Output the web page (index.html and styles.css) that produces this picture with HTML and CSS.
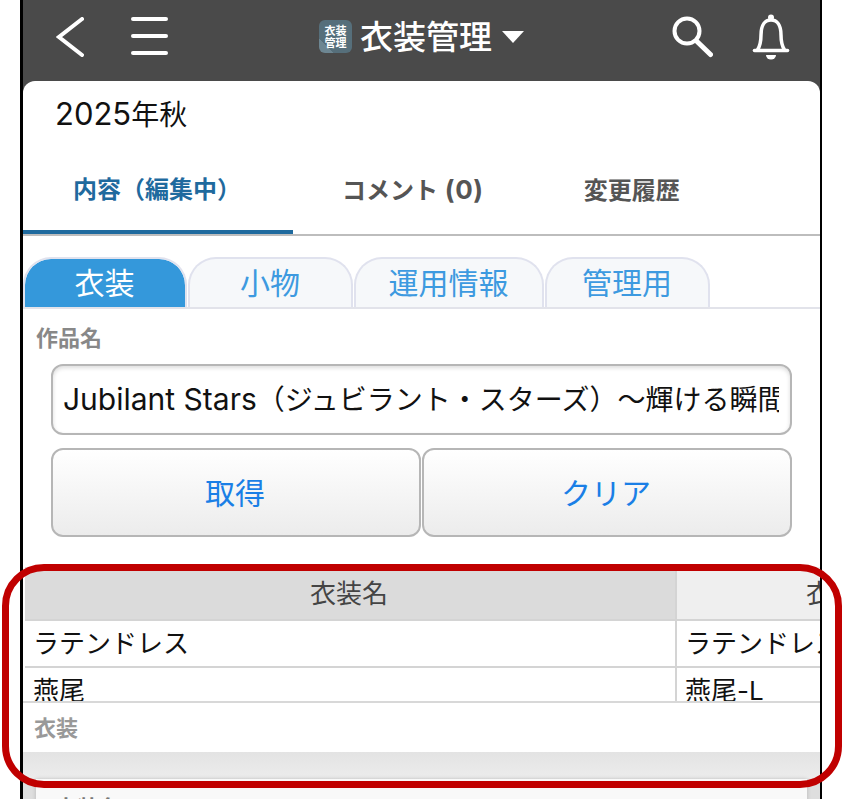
FILE: index.html
```html
<!DOCTYPE html>
<html lang="ja">
<head>
<meta charset="utf-8">
<title>衣装管理</title>
<link rel="stylesheet" href="styles.css">
</head>
<body>
<div class="phone">
  <header class="topbar">
    <svg class="ic-back" width="28" height="40" viewBox="0 0 28 40"><path d="M26 2 L3 20 L26 38" fill="none" stroke="#fff" stroke-width="4" stroke-linecap="round" stroke-linejoin="miter"/></svg>
    <div class="ic-menu"><span></span><span></span><span></span></div>
    <div class="app-icon"><span>衣装</span><span>管理</span></div>
    <div class="app-title">衣装管理</div>
    <div class="caret"></div>
    <svg class="ic-search" width="41" height="42" viewBox="0 0 41 42"><circle cx="15" cy="15" r="12.5" fill="none" stroke="#fff" stroke-width="4"/><path d="M24.5 25 L38.5 38.5" stroke="#fff" stroke-width="5" stroke-linecap="round"/></svg>
    <svg class="ic-bell" width="38" height="47" viewBox="0 0 38 47"><circle cx="19" cy="4.5" r="3" fill="#fff"/><path d="M5.5 37 C8 33 9 29 9 22 C9 12 13 7 19 7 C25 7 29 12 29 22 C29 29 30 33 32.5 37" fill="none" stroke="#fff" stroke-width="3.5"/><path d="M2.5 37.5 H35.5" stroke="#fff" stroke-width="3.6" stroke-linecap="round"/><path d="M14 42 H24 A5 4.5 0 0 1 14 42 Z" fill="#fff"/></svg>
  </header>
  <main class="card">
    <div class="record-title"><span class="digits">2025</span>年秋</div>
    <nav class="nav">
      <div class="nav-item active">内容（編集中）</div>
      <div class="nav-item"><span>コメント<span class="nav-latin">&nbsp;(0)</span></span></div>
      <div class="nav-item">変更履歴</div>
    </nav>
    <div class="subtabs">
      <div class="subtab on">衣装</div>
      <div class="subtab">小物</div>
      <div class="subtab">運用情報</div>
      <div class="subtab">管理用</div>
    </div>
    <div class="field-label">作品名</div>
    <div class="text-input"><div class="text-clip"><span class="input-latin">Jubilant Stars</span>（ジュビラント・スターズ）～輝ける瞬間の物語</div></div>
    <div class="btn-row">
      <button class="btn" type="button">取得</button>
      <button class="btn" type="button">クリア</button>
    </div>
    <div class="table">
      <div class="row head">
        <div class="cell c1">衣装名</div>
        <div class="cell c2">衣装コード</div>
      </div>
      <div class="row">
        <div class="cell c1">ラテンドレス</div>
        <div class="cell c2">ラテンドレス-M</div>
      </div>
      <div class="row">
        <div class="cell c1">燕尾</div>
        <div class="cell c2">燕尾-L</div>
      </div>
    </div>
    <section class="section">
      <div class="section-label">衣装</div>
    </section>
    <div class="well">
      <div class="panel"><div class="panel-label">衣装名</div></div>
    </div>
  </main>
</div>
<div class="highlight"></div>
</body>
</html>
```
FILE: styles.css
```css
* { box-sizing: border-box; }
html, body { margin: 0; padding: 0; height: 799px; overflow: hidden; background: #fff; }
body {
  position: relative;
  font-family: Inter, "Noto Sans CJK JP", sans-serif;
  color: #111;
}
.phone {
  width: 802px;
  height: 799px;
  margin-left: 20px;
  border-left: 3px solid #000;
  border-right: 2px solid #000;
  background: #4a4a4a;
  overflow: hidden;
  display: flex;
  flex-direction: column;
}
.topbar {
  flex: none;
  height: 81px;
  display: flex;
  align-items: center;
  padding-left: 33px;
  color: #fff;
}
.ic-back { margin-top: -8px; }
.ic-menu {
  width: 37px;
  margin-left: 47px;
  margin-top: -9px;
  display: flex;
  flex-direction: column;
  gap: 13px;
}
.ic-menu span { display: block; height: 4px; border-radius: 2px; background: #fff; }
.app-icon {
  width: 33px;
  height: 33px;
  margin-left: 151px;
  margin-top: -8px;
  border-radius: 6px;
  background: linear-gradient(45deg, #6d8692 0 22%, #566f7b 22%);
  display: flex;
  flex-direction: column;
  align-items: center;
  justify-content: center;
  font-size: 11px;
  line-height: 12px;
  font-weight: 700;
  color: #fff;
}
.app-title { margin-left: 8px; margin-top: -8px; font-size: 33px; line-height: 40px; font-weight: 500; white-space: nowrap; }
.caret {
  margin-left: 10px;
  margin-top: -8px;
  width: 0;
  height: 0;
  border-left: 11px solid transparent;
  border-right: 11px solid transparent;
  border-top: 12px solid #fff;
}
.ic-search { margin-left: 148px; margin-top: -8px; }
.ic-bell { margin-left: 39px; margin-top: -9px; }

.card {
  flex: 1;
  min-height: 0;
  background: #fff;
  border-radius: 12px 12px 0 0;
  overflow: hidden;
}
.record-title {
  height: 70px;
  padding: 0 0 6px 32px;
  display: flex;
  align-items: center;
  font-size: 28px;
}
.digits { font-size: 31px; }
.nav {
  height: 85px;
  display: flex;
  border-bottom: 2px solid #bdbdbd;
}
.nav-item {
  padding: 0 51px 8px 49px;
  display: flex;
  align-items: center;
  font-size: 24px;
  font-weight: 700;
  color: #555;
  white-space: nowrap;
}
.nav-latin { font-size: 26px; letter-spacing: .6px; }
.nav-item.active {
  padding-left: 50px;
  padding-right: 52px;
  color: #1f6a9e;
  border-bottom: 4px solid #1f6a9e;
  height: 83px;
  padding-bottom: 6px;
}
.subtabs {
  margin-top: 21px;
  display: grid;
  grid-template-columns: 164px 165px 190px 165px;
  column-gap: 1px;
  height: 52px;
  border-bottom: 2px solid #e2e3ea;
}
.subtab {
  border: 2px solid #e0e2ee;
  border-bottom: 0;
  border-radius: 28px 28px 0 0;
  background: #f6f8fa;
  color: #3d9ae0;
  font-size: 30px;
  line-height: 48px;
  padding-right: 1px;
  text-align: center;
}
.subtab.on {
  background: #3498db;
  color: #fff;
  background-clip: padding-box;
}
.field-label {
  padding-left: 13px;
  margin-top: 15px;
  font-size: 22px;
  line-height: 28px;
  font-weight: 700;
  color: #888;
}
.text-input {
  width: 741px;
  height: 71px;
  margin: 12px 0 0 28px;
  padding: 0 11px 4px 10px;
  border: 2px solid #b6b6b6;
  border-radius: 12px;
  background: #fff;
  box-shadow: inset 0 2px 4px rgba(0,0,0,.14);
  font-size: 28px;
  color: #111;
  display: flex;
  align-items: center;
}
.text-clip { flex: 1; min-width: 0; overflow: hidden; white-space: nowrap; }
.input-latin { font-size: 30px; }
.btn-row {
  margin: 13px 0 0 28px;
  width: 741px;
  display: grid;
  grid-template-columns: 1fr 1fr;
  column-gap: 1px;
}
.btn {
  height: 89px;
  border: 2px solid #b6b6b6;
  border-radius: 12px;
  background: linear-gradient(#fff, #ececec);
  color: #1a7fe6;
  font: inherit;
  font-size: 30px;
  padding: 0 2px 4px 0;
}
.table {
  margin: 30px 0 0 2px;
  height: 134px;
  overflow: hidden;
}
.row {
  display: flex;
  height: 47px;
  font-size: 26px;
  border-bottom: 2px solid #d4d4d4;
}
.row.head { height: 54px; }
.cell {
  flex: none;
  display: flex;
  align-items: center;
  padding: 0 10px 5px 8px;
  white-space: nowrap;
  overflow: hidden;
}
.c1 { width: 652px; border-right: 2px solid #d4d4d4; }
.c2 { width: 200px; }
.row.head .cell { justify-content: center; color: #444; padding-bottom: 4px; }
.row.head .c1 { background: #dbdbdb; padding-right: 10px; }
.row.head .c2 { background: #efefef; justify-content: flex-start; padding-left: 129px; }
.section {
  height: 51px;
  border-top: 2px solid #d8d8d8;
  background: #fff;
  padding: 0 0 4px 11px;
  display: flex;
  align-items: center;
}
.section-label { font-size: 22px; font-weight: 700; color: #999; }
.well {
  height: 60px;
  background: linear-gradient(#e3e3e3, #ececec 26px, #dedede 28px);
  padding: 27px 13px 0;
}
.panel {
  height: 60px;
  background: #f9f9f9;
  box-shadow: 0 0 4px rgba(0,0,0,.18);
  padding: 15px 0 0 19px;
}
.panel-label { font-size: 22px; line-height: 28px; font-weight: 700; color: #777; }
.highlight {
  position: absolute;
  left: 2px;
  top: 564px;
  width: 840px;
  height: 224px;
  border: 7px solid #c00000;
  border-radius: 42px;
  pointer-events: none;
}
```
